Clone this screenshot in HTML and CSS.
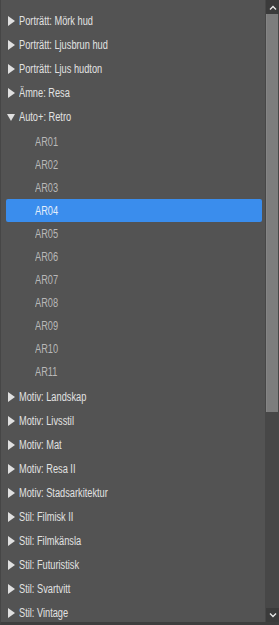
FILE: index.html
```html
<!DOCTYPE html>
<html lang="sv">
<head>
    <meta charset="UTF-8">
    <title>Förinställningar</title>
    <link rel="stylesheet" href="styles.css">
</head>
<body>
    <div class="panel">
        <div class="list">
            <div class="row"><span class="arrow"></span><span class="label">Porträtt: Mörk hud</span></div>
            <div class="row"><span class="arrow"></span><span class="label">Porträtt: Ljusbrun hud</span></div>
            <div class="row"><span class="arrow"></span><span class="label">Porträtt: Ljus hudton</span></div>
            <div class="row"><span class="arrow"></span><span class="label">Ämne: Resa</span></div>
            <div class="row open"><span class="arrow"></span><span class="label">Auto+: Retro</span></div>
            <div class="children">
                <div class="child"><span class="label">AR01</span></div>
                <div class="child"><span class="label">AR02</span></div>
                <div class="child"><span class="label">AR03</span></div>
                <div class="child selected"><span class="label">AR04</span></div>
                <div class="child"><span class="label">AR05</span></div>
                <div class="child"><span class="label">AR06</span></div>
                <div class="child"><span class="label">AR07</span></div>
                <div class="child"><span class="label">AR08</span></div>
                <div class="child"><span class="label">AR09</span></div>
                <div class="child"><span class="label">AR10</span></div>
                <div class="child"><span class="label">AR11</span></div>
            </div>
            <div class="row"><span class="arrow"></span><span class="label">Motiv: Landskap</span></div>
            <div class="row"><span class="arrow"></span><span class="label">Motiv: Livsstil</span></div>
            <div class="row"><span class="arrow"></span><span class="label">Motiv: Mat</span></div>
            <div class="row"><span class="arrow"></span><span class="label">Motiv: Resa II</span></div>
            <div class="row"><span class="arrow"></span><span class="label">Motiv: Stadsarkitektur</span></div>
            <div class="row"><span class="arrow"></span><span class="label">Stil: Filmisk II</span></div>
            <div class="row"><span class="arrow"></span><span class="label">Stil: Filmkänsla</span></div>
            <div class="row"><span class="arrow"></span><span class="label">Stil: Futuristisk</span></div>
            <div class="row"><span class="arrow"></span><span class="label">Stil: Svartvitt</span></div>
            <div class="row"><span class="arrow"></span><span class="label">Stil: Vintage</span></div>
        </div>
        <div class="scrollbar">
            <div class="scroll-btn">
                <svg width="8" height="5" viewBox="0 0 8 5"><path d="M1 4.5 L4 1.5 L7 4.5" fill="none" stroke="#e8e8e8" stroke-width="1.4"/></svg>
            </div>
            <div class="track">
                <div class="thumb"></div>
            </div>
            <div class="scroll-btn">
                <svg width="8" height="5" viewBox="0 0 8 5"><path d="M1 0.5 L4 3.5 L7 0.5" fill="none" stroke="#e8e8e8" stroke-width="1.4"/></svg>
            </div>
        </div>
    </div>
</body>
</html>
```

FILE: styles.css
```css
* {
    margin: 0;
    padding: 0;
    box-sizing: border-box;
}

body {
    background: #3c3c3c;
    font-family: 'Liberation Sans', Arial, sans-serif;
    font-size: 12px;
}

.panel {
    width: 279px;
    height: 625px;
    display: flex;
    background: #535353;
    border-left: 1px solid #464646;
    border-bottom: 3px solid #3e3e3e;
    overflow: hidden;
}

.list {
    flex: 1;
    padding-top: 9px;
    overflow: hidden;
}

/* narrow UI face, like Arial Narrow */
.label {
    display: inline-block;
    white-space: nowrap;
    transform: scaleX(0.77);
    transform-origin: left center;
}

.row {
    height: 24px;
    display: flex;
    align-items: center;
    padding-left: 7px;
    color: #e2e2e2;
    white-space: nowrap;
}

.arrow {
    width: 0;
    height: 0;
    border-top: 5px solid transparent;
    border-bottom: 5px solid transparent;
    border-left: 7px solid #e0e0e0;
    margin-right: 4px;
}

.row.open .arrow {
    border-left: 4.5px solid transparent;
    border-right: 4.5px solid transparent;
    border-top: 7px solid #e0e0e0;
    border-bottom: none;
    margin-left: -1px;
    margin-right: 4px;
}

.children {
    padding-top: 1px;
    margin-bottom: 2px;
}

.child {
    height: 23px;
    display: flex;
    align-items: center;
    margin-left: 5px;
    margin-right: 3px;
    padding-left: 29px;
    color: #b8b8b8;
    border-radius: 2px;
}

.child.selected {
    background: #3a8ded;
    color: #e4eefb;
}

.scrollbar {
    width: 14px;
    display: flex;
    flex-direction: column;
    background: #3e3e3e;
    border-left: 1px solid #474747;
}

.scroll-btn {
    height: 14px;
    display: flex;
    align-items: center;
    justify-content: center;
    background: #3b3b3b;
}

.track {
    flex: 1;
    background: #474747;
    padding: 0 1px 0 0;
}

.thumb {
    height: 398px;
    background: #7d7d7d;
    border-left: 1px solid #858585;
}
```
